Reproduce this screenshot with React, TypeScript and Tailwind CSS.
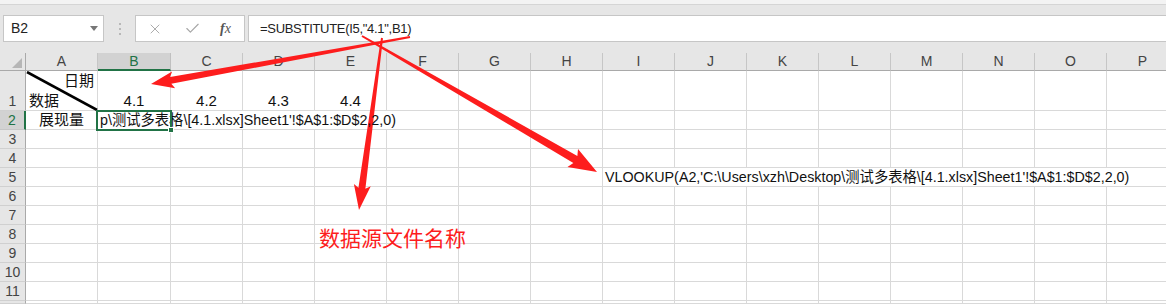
import * as React from 'react'
import { X, Check } from 'lucide-react'

const cellFont = { fontFamily: '"Liberation Sans", "Noto Sans CJK SC", sans-serif' }

const columns = [
  { key: 'A', w: 'w-[72px]' },
  { key: 'B', w: 'w-[73px]' },
  { key: 'C', w: 'w-[72px]' },
  { key: 'D', w: 'w-[72px]' },
  { key: 'E', w: 'w-[72px]' },
  { key: 'F', w: 'w-[72px]' },
  { key: 'G', w: 'w-[72px]' },
  { key: 'H', w: 'w-[72px]' },
  { key: 'I', w: 'w-[72px]' },
  { key: 'J', w: 'w-[72px]' },
  { key: 'K', w: 'w-[72px]' },
  { key: 'L', w: 'w-[72px]' },
  { key: 'M', w: 'w-[72px]' },
  { key: 'N', w: 'w-[72px]' },
  { key: 'O', w: 'w-[72px]' },
  { key: 'P', w: 'w-[72px]' },
]

// cells whose right gridline is hidden by overflowing text
const hideRight: Record<string, boolean> = {
  C2: true, D2: true, E2: true,
  I5: true, J5: true, K5: true, L5: true, M5: true, N5: true, O5: true,
}

function arrowPoints(sx: number, sy: number, tx: number, ty: number, w0: number, w1: number, hl: number, hw: number) {
  const dx = tx - sx
  const dy = ty - sy
  const len = Math.hypot(dx, dy)
  const ux = dx / len
  const uy = dy / len
  const nx = -uy
  const ny = ux
  const bx = tx - ux * hl
  const by = ty - uy * hl
  const pts = [
    [sx + nx * w0 / 2, sy + ny * w0 / 2],
    [bx + nx * w1 / 2, by + ny * w1 / 2],
    [bx + nx * hw / 2 - ux * 3, by + ny * hw / 2 - uy * 3],
    [tx, ty],
    [bx - nx * hw / 2 - ux * 3, by - ny * hw / 2 - uy * 3],
    [bx - nx * w1 / 2, by - ny * w1 / 2],
    [sx - nx * w0 / 2, sy - ny * w0 / 2],
  ]
  return pts.map((p) => p.join(',')).join(' ')
}

function Cell({ row, col, w }: { row: number; col: string; w: string }) {
  const id = col + row
  const border = hideRight[id] ? 'border-b border-[#d9d9d9]' : 'border-b border-r border-[#d9d9d9]'
  const h = row === 1 ? 'h-[40px]' : row === 12 ? 'h-[3px]' : 'h-[19px]'

  if (id === 'A1') {
    return (
      <div className={`relative shrink-0 ${w} ${h} ${border} text-[15px] text-[#111]`}>
        <svg className="absolute inset-0" width="72" height="40">
          <line x1="1" y1="1" x2="71" y2="39" stroke="#000" strokeWidth="2.6" />
        </svg>
        <div className="flex h-full flex-col justify-between px-[3px] leading-[18px]">
          <span className="self-end pt-[1px]">日期</span>
          <span className="self-start">数据</span>
        </div>
      </div>
    )
  }
  if (row === 1 && ['B', 'C', 'D', 'E'].includes(col)) {
    const v = { B: '4.1', C: '4.2', D: '4.3', E: '4.4' }[col]
    return (
      <div className={`flex shrink-0 items-end justify-center ${w} ${h} ${border} text-[15px] leading-[18px] text-[#111]`}>
        {v}
      </div>
    )
  }
  if (id === 'A2') {
    return (
      <div className={`flex shrink-0 items-center justify-center ${w} ${h} ${border} text-[15px] text-[#111]`}>
        展现量
      </div>
    )
  }
  if (id === 'B2') {
    return (
      <div className={`relative z-10 flex shrink-0 items-center ${w} ${h} ${border} text-[14.3px] text-[#111]`}>
        <span className="whitespace-nowrap pl-[2px] leading-[19px]">p\测试多表格\[4.1.xlsx]Sheet1'!$A$1:$D$2,2,0)</span>
        <div className="absolute -left-[2px] -top-[1px] h-[21px] w-[76px] border-2 border-[#217346]" />
        <div className="absolute -bottom-[4px] -right-[4px] h-[6px] w-[6px] border border-white bg-[#217346]" />
      </div>
    )
  }
  if (id === 'I5') {
    return (
      <div className={`flex shrink-0 items-center ${w} ${h} ${border} text-[14.3px] text-[#111]`}>
        <span className="whitespace-nowrap pl-[2px] leading-[19px]">VLOOKUP(A2,'C:\Users\xzh\Desktop\测试多表格\[4.1.xlsx]Sheet1'!$A$1:$D$2,2,0)</span>
      </div>
    )
  }
  return <div className={`shrink-0 ${w} ${h} ${border}`} />
}

export default function App() {
  const rows = Array.from({ length: 12 }, (_, i) => i + 1)

  return (
    <div className="relative h-[304px] w-[1166px] overflow-hidden bg-white" style={cellFont}>
      {/* formula bar */}
      <div className="h-[5px] border-b border-[#d5d5d5] bg-[#f3f3f3]" />
      <div className="flex h-[48px] items-start gap-0 bg-[#e6e6e6] pt-[10px]">
        <div className="ml-[3px] flex h-[27px] w-[101px] items-center justify-between border border-[#c6c6c6] bg-white pl-[7px] pr-[5px] text-[14px] text-[#222]">
          <span>B2</span>
          <span className="h-0 w-0 border-x-[4px] border-t-[5px] border-x-transparent border-t-[#777]" />
        </div>
        <div className="flex h-[27px] w-[31px] flex-col items-center justify-center gap-[3px]">
          <span className="h-[2px] w-[2px] rounded-full bg-[#a8a8a8]" />
          <span className="h-[2px] w-[2px] rounded-full bg-[#a8a8a8]" />
          <span className="h-[2px] w-[2px] rounded-full bg-[#a8a8a8]" />
        </div>
        <div className="flex h-[27px] w-[110px] items-center border border-[#c6c6c6] bg-white pl-[11px]">
          <X className="h-[16px] w-[16px] text-[#a6a6a6]" strokeWidth={1.4} />
          <Check className="ml-[21px] h-[17px] w-[17px] text-[#a6a6a6]" strokeWidth={1.6} />
          <span className="ml-[19px] text-[14px] italic text-[#555]" style={{ fontFamily: '"Liberation Serif", serif' }}>
            <span className="font-bold">f</span>x
          </span>
        </div>
        <div className="ml-[3px] flex h-[27px] flex-1 items-center border-y border-l border-[#c6c6c6] bg-white pl-[11px] text-[13px] tracking-[-0.3px] text-[#222]">
          =SUBSTITUTE(I5,"4.1",B1)
        </div>
      </div>

      {/* column headers */}
      <div className="flex h-[18px] bg-[#e6e6e6]">
        <div className="relative w-[26px] shrink-0 border-b border-r border-[#a9a9a9]">
          <span className="absolute bottom-[2px] right-[3px] h-0 w-0 border-b-[10px] border-l-[10px] border-l-transparent border-b-[#b6b6b6]" />
        </div>
        {columns.map((c) =>
          c.key === 'B' ? (
            <div key={c.key} className={`flex ${c.w} shrink-0 items-center justify-center border-b-2 border-r border-b-[#217346] border-r-[#c0c0c0] bg-[#d2d2d2] text-[14px] text-[#217346]`}>
              {c.key}
            </div>
          ) : (
            <div key={c.key} className={`flex ${c.w} shrink-0 items-center justify-center border-b border-r border-b-[#a9a9a9] border-r-[#c6c6c6] text-[14px] text-[#444]`}>
              {c.key}
            </div>
          )
        )}
      </div>

      {/* rows */}
      {rows.map((r) => (
        <div key={r} className="flex">
          <div
            className={`flex w-[26px] shrink-0 items-end justify-center overflow-hidden border-b text-[14px] ${
              r === 2
                ? 'border-r-2 border-b-[#c6c6c6] border-r-[#217346] bg-[#d2d2d2] text-[#217346]'
                : 'border-r border-b-[#d0d0d0] border-r-[#a9a9a9] bg-[#e6e6e6] text-[#444]'
            } ${r === 1 ? 'h-[40px]' : r === 12 ? 'h-[3px]' : 'h-[19px]'} leading-[18px]`}
          >
            {r < 12 ? r : null}
          </div>
          {columns.map((c) => (
            <Cell key={c.key} row={r} col={c.key} w={c.w} />
          ))}
        </div>
      ))}

      {/* annotation: red arrows and label */}
      <svg className="pointer-events-none absolute left-0 top-0" width="1166" height="304">
        <g fill="#fd1d1d">
          <polygon points={arrowPoints(410, 37, 151, 84, 2, 7, 20, 17)} />
          <polygon points={arrowPoints(362, 36, 597, 172, 2, 8, 25, 21)} />
          <polygon points={arrowPoints(382, 38, 359, 210, 2, 7, 22, 17)} />
        </g>
      </svg>
      <div
        className="absolute left-[319px] top-[224px] text-[21px] leading-[26px] text-[#fd1d1d]"
        style={{ fontFamily: '"Noto Sans CJK SC", sans-serif' }}
      >
        数据源文件名称
      </div>
    </div>
  )
}
